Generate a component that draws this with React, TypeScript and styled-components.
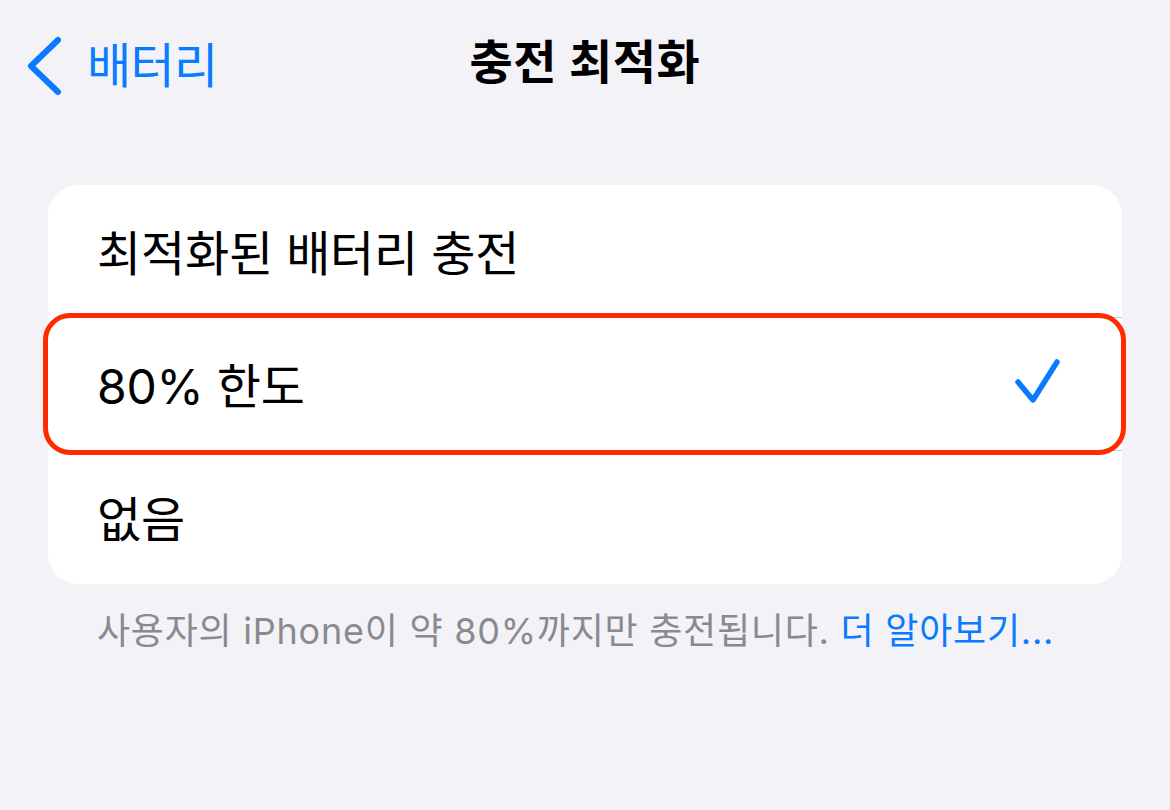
import styled, { createGlobalStyle } from "styled-components";

const GlobalStyle = createGlobalStyle`
  html, body {
    margin: 0;
    padding: 0;
    background: #f2f2f7;
  }
  body {
    font-family: Inter, "Noto Sans CJK KR", sans-serif;
    -webkit-font-smoothing: antialiased;
  }
`;

const Screen = styled.div`
  width: 1170px;
  height: 810px;
  background: #f2f2f7;
  display: flex;
  flex-direction: column;
  overflow: hidden;
`;

const NavBar = styled.div`
  position: relative;
  height: 132px;
  display: flex;
  align-items: center;
  justify-content: center;
  padding-bottom: 4px;
  box-sizing: border-box;
`;

const BackButton = styled.div`
  position: absolute;
  left: 26px;
  top: 36px;
  display: flex;
  align-items: center;
  gap: 21px;
  color: #0a7aff;
  font-size: 48px;
  letter-spacing: -0.6px;
  line-height: 60px;
`;

const Title = styled.div`
  font-size: 47px;
  font-weight: 700;
  color: #000;
  letter-spacing: 0.6px;
  line-height: 60px;
  margin-top: -4px;
`;

const Card = styled.div`
  margin: 53px 48px 0;
  background: #fff;
  border-radius: 30px;
  display: flex;
  flex-direction: column;
`;

const Row = styled.div<{ $divider?: boolean }>`
  position: relative;
  height: 133px;
  display: flex;
  align-items: center;
  justify-content: space-between;
  padding: 0 58px 4px 49px;
  font-size: 48px;
  letter-spacing: -0.2px;
  color: #000;
  box-sizing: border-box;

  &::after {
    content: "";
    display: ${(p) => (p.$divider ? "block" : "none")};
    position: absolute;
    left: 49px;
    right: 0;
    bottom: 0;
    height: 1px;
    background: #c8c8cc;
  }
`;

const Highlight = styled.div`
  position: absolute;
  z-index: 2;
  left: -5px;
  right: -4px;
  top: -5px;
  bottom: -4px;
  border: 5px solid #ff2a00;
  border-radius: 27px;
  pointer-events: none;
`;

const Footer = styled.div`
  padding: 18px 0 0 97px;
  font-size: 36px;
  letter-spacing: 0.75px;
  color: #8a8a8e;
`;

const Link = styled.span`
  color: #0a7aff;
`;

const Chevron = () => (
  <svg width="40" height="60" viewBox="0 0 40 60">
    <path
      d="M32 4 L5 30 L32 56"
      fill="none"
      stroke="#0a7aff"
      strokeWidth="6"
      strokeLinecap="round"
      strokeLinejoin="round"
    />
  </svg>
);

const Check = () => (
  <svg width="50" height="52" viewBox="0 0 50 52">
    <path
      d="M4 25 L19 43 L43 5"
      fill="none"
      stroke="#0a7aff"
      strokeWidth="5.5"
      strokeLinecap="round"
      strokeLinejoin="round"
    />
  </svg>
);

const App = () => (
  <Screen>
    <GlobalStyle />
    <NavBar>
      <BackButton>
        <Chevron />
        <span>배터리</span>
      </BackButton>
      <Title>충전 최적화</Title>
    </NavBar>
    <Card>
      <Row $divider>최적화된 배터리 충전</Row>
      <Row $divider>
        <span>80% 한도</span>
        <Check />
        <Highlight />
      </Row>
      <Row>없음</Row>
    </Card>
    <Footer>
      사용자의 iPhone이 약 80%까지만 충전됩니다. <Link>더 알아보기...</Link>
    </Footer>
  </Screen>
);

export default App;
